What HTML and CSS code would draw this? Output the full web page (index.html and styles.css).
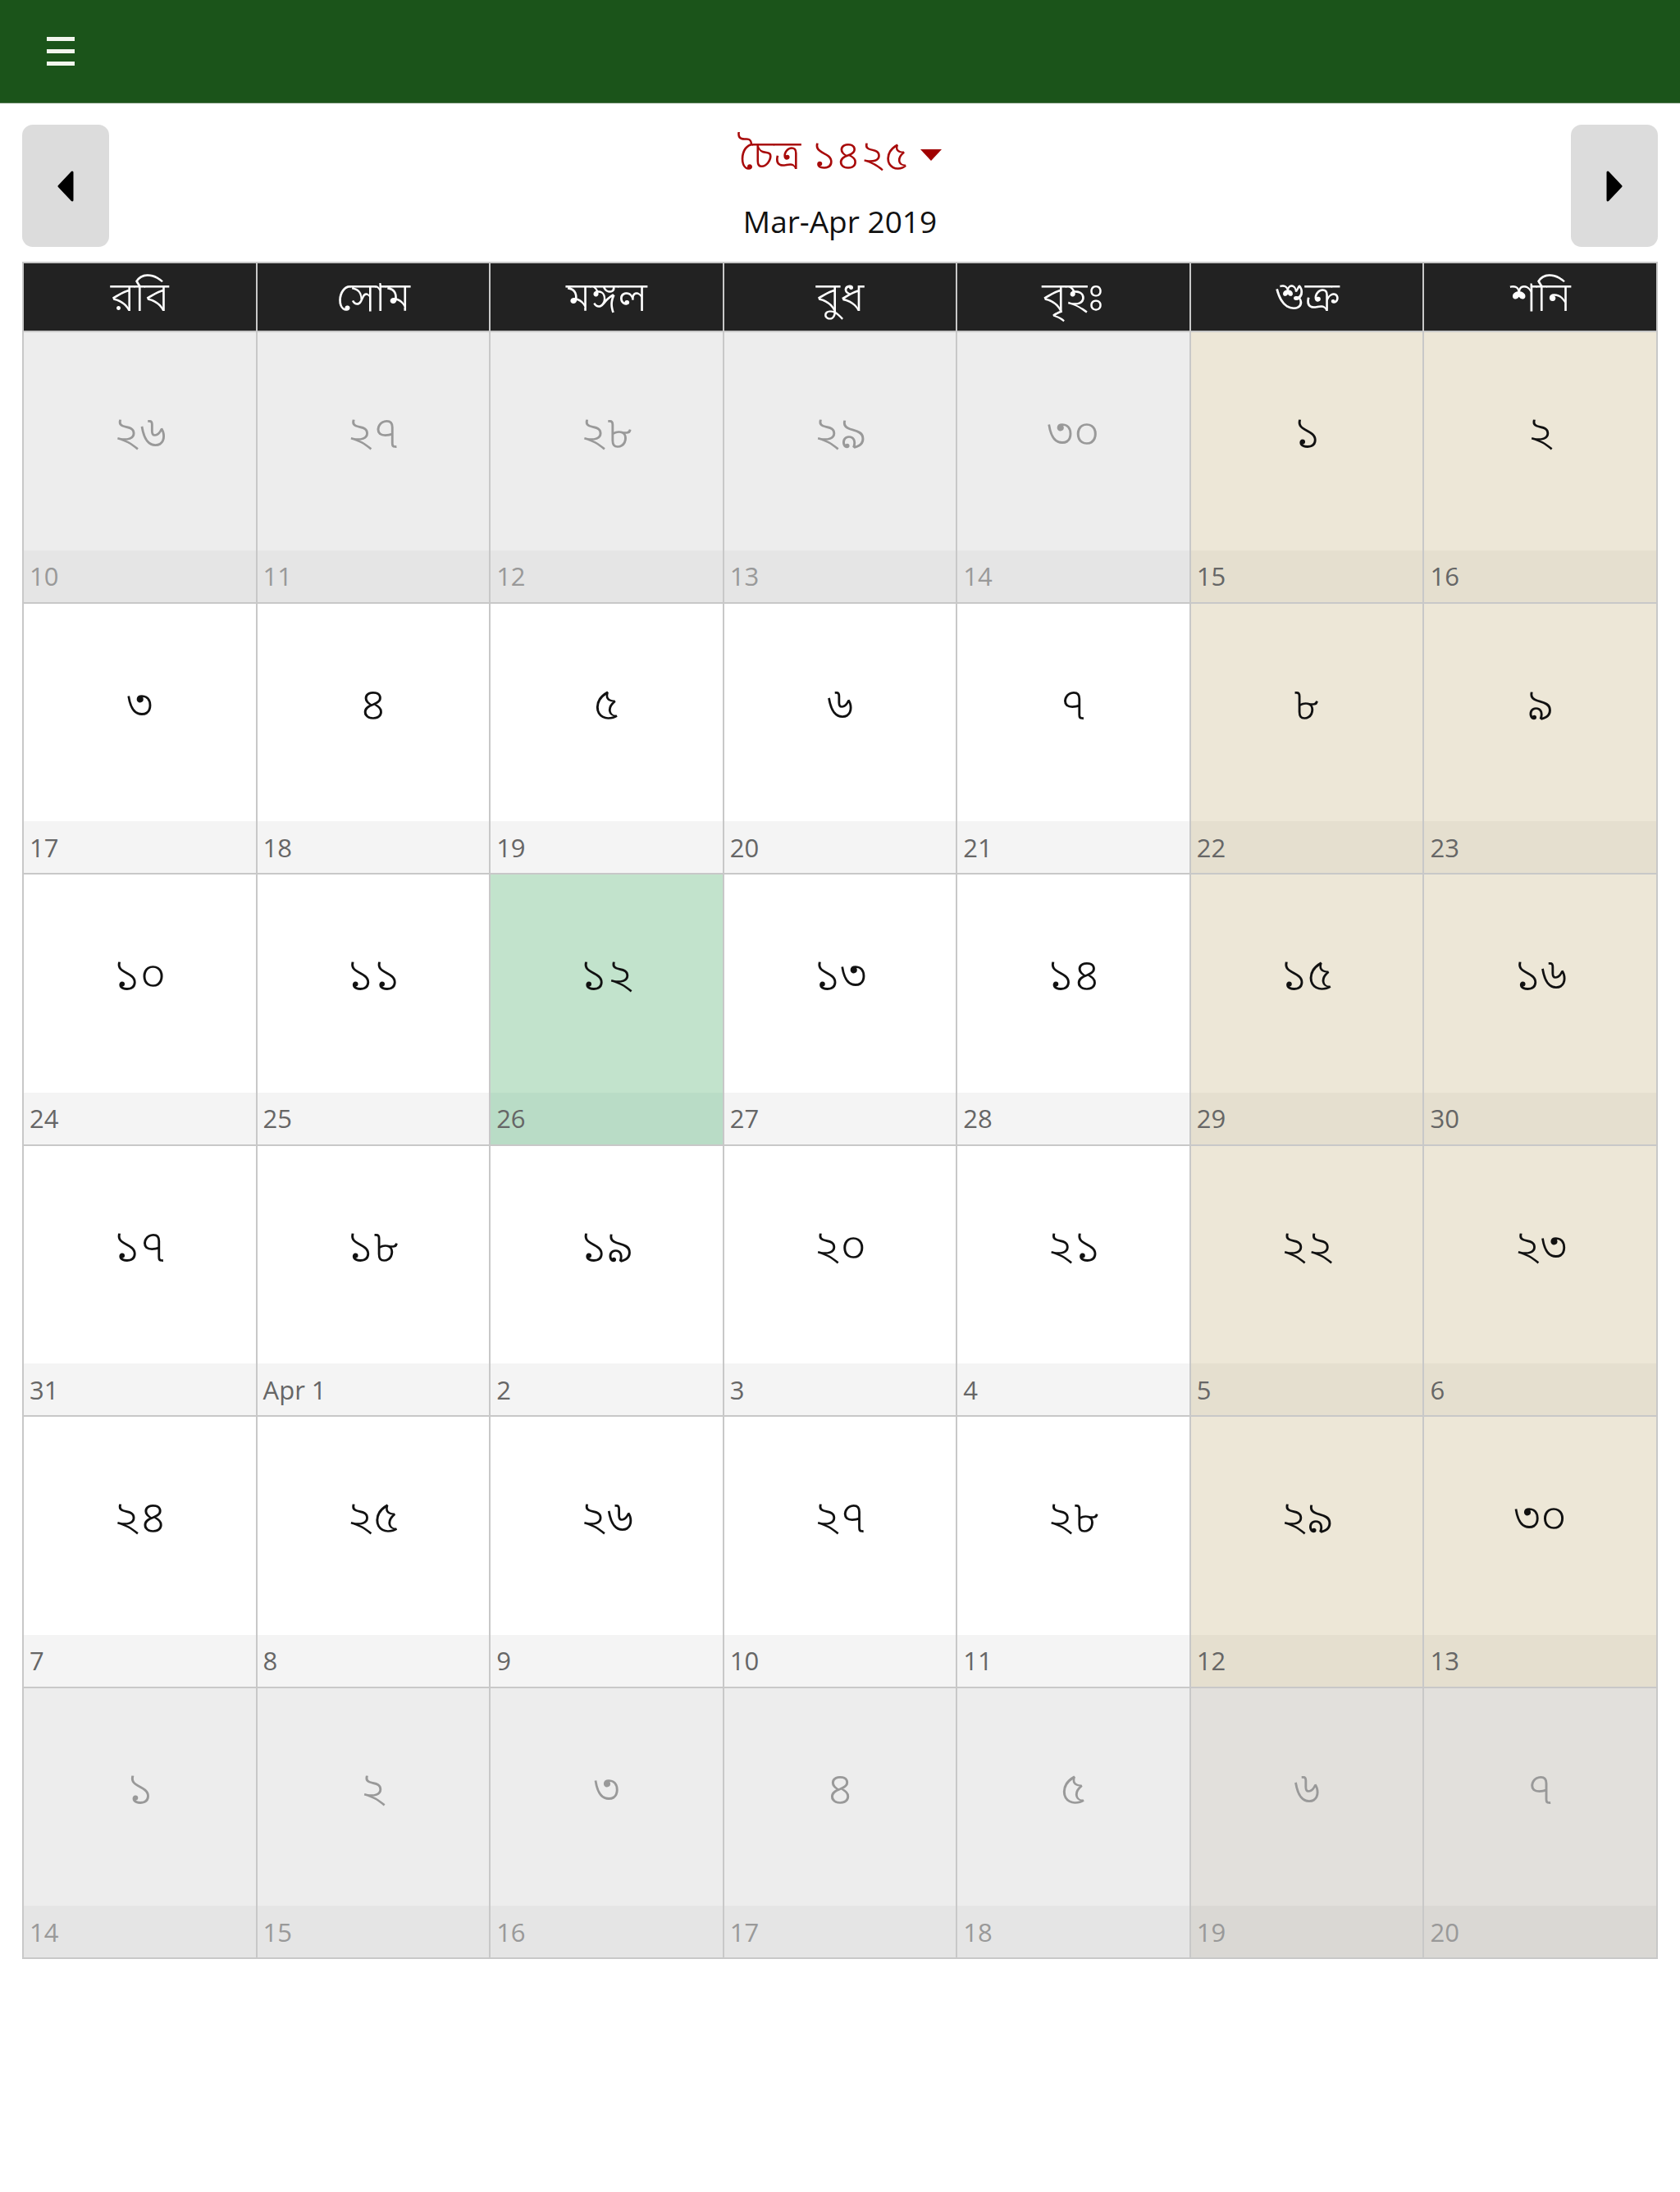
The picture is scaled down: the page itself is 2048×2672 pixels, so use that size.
FILE: index.html
```html
<!DOCTYPE html>
<html lang="bn">
<head>
<meta charset="utf-8">
<title>বাংলা ক্যালেন্ডার</title>
<link rel="stylesheet" href="styles.css">
</head>
<body>
<header class="topbar">
  <button class="menu" aria-label="menu"><span></span><span></span><span></span></button>
</header>
<nav class="monthnav">
  <button class="navbtn" aria-label="previous">
    <svg width="22" height="38" viewBox="0 0 22 38"><polygon points="19,2 19,36 3,19" fill="#000" stroke="#000" stroke-width="3" stroke-linejoin="round"/></svg>
  </button>
  <div class="monthtitle">
    <div class="bn-month">চৈত্র ১৪২৫<span class="caret"></span></div>
    <div class="en-month">Mar-Apr 2019</div>
  </div>
  <button class="navbtn" aria-label="next">
    <svg width="22" height="38" viewBox="0 0 22 38"><polygon points="3,2 3,36 19,19" fill="#000" stroke="#000" stroke-width="3" stroke-linejoin="round"/></svg>
  </button>
</nav>
<main class="cal">
  <div class="dow">রবি</div><div class="dow">সোম</div><div class="dow">মঙ্গল</div><div class="dow">বুধ</div><div class="dow">বৃহঃ</div><div class="dow">শুক্র</div><div class="dow">শনি</div>

  <div class="day out"><div class="bn">২৬</div><div class="gr">10</div></div>
  <div class="day out"><div class="bn">২৭</div><div class="gr">11</div></div>
  <div class="day out"><div class="bn">২৮</div><div class="gr">12</div></div>
  <div class="day out"><div class="bn">২৯</div><div class="gr">13</div></div>
  <div class="day out"><div class="bn">৩০</div><div class="gr">14</div></div>
  <div class="day wk"><div class="bn">১</div><div class="gr">15</div></div>
  <div class="day wk"><div class="bn">২</div><div class="gr">16</div></div>

  <div class="day"><div class="bn">৩</div><div class="gr">17</div></div>
  <div class="day"><div class="bn">৪</div><div class="gr">18</div></div>
  <div class="day"><div class="bn">৫</div><div class="gr">19</div></div>
  <div class="day"><div class="bn">৬</div><div class="gr">20</div></div>
  <div class="day"><div class="bn">৭</div><div class="gr">21</div></div>
  <div class="day wk"><div class="bn">৮</div><div class="gr">22</div></div>
  <div class="day wk"><div class="bn">৯</div><div class="gr">23</div></div>

  <div class="day"><div class="bn">১০</div><div class="gr">24</div></div>
  <div class="day"><div class="bn">১১</div><div class="gr">25</div></div>
  <div class="day today"><div class="bn">১২</div><div class="gr">26</div></div>
  <div class="day"><div class="bn">১৩</div><div class="gr">27</div></div>
  <div class="day"><div class="bn">১৪</div><div class="gr">28</div></div>
  <div class="day wk"><div class="bn">১৫</div><div class="gr">29</div></div>
  <div class="day wk"><div class="bn">১৬</div><div class="gr">30</div></div>

  <div class="day"><div class="bn">১৭</div><div class="gr">31</div></div>
  <div class="day"><div class="bn">১৮</div><div class="gr">Apr 1</div></div>
  <div class="day"><div class="bn">১৯</div><div class="gr">2</div></div>
  <div class="day"><div class="bn">২০</div><div class="gr">3</div></div>
  <div class="day"><div class="bn">২১</div><div class="gr">4</div></div>
  <div class="day wk"><div class="bn">২২</div><div class="gr">5</div></div>
  <div class="day wk"><div class="bn">২৩</div><div class="gr">6</div></div>

  <div class="day"><div class="bn">২৪</div><div class="gr">7</div></div>
  <div class="day"><div class="bn">২৫</div><div class="gr">8</div></div>
  <div class="day"><div class="bn">২৬</div><div class="gr">9</div></div>
  <div class="day"><div class="bn">২৭</div><div class="gr">10</div></div>
  <div class="day"><div class="bn">২৮</div><div class="gr">11</div></div>
  <div class="day wk"><div class="bn">২৯</div><div class="gr">12</div></div>
  <div class="day wk"><div class="bn">৩০</div><div class="gr">13</div></div>

  <div class="day out"><div class="bn">১</div><div class="gr">14</div></div>
  <div class="day out"><div class="bn">২</div><div class="gr">15</div></div>
  <div class="day out"><div class="bn">৩</div><div class="gr">16</div></div>
  <div class="day out"><div class="bn">৪</div><div class="gr">17</div></div>
  <div class="day out"><div class="bn">৫</div><div class="gr">18</div></div>
  <div class="day out wk"><div class="bn">৬</div><div class="gr">19</div></div>
  <div class="day out wk"><div class="bn">৭</div><div class="gr">20</div></div>
</main>
</body>
</html>
```
FILE: styles.css
```css
* { box-sizing: border-box; }
html, body { margin: 0; padding: 0; background: #fff; }
body {
  font-family: "Open Sans", "Noto Sans Bengali", "Lohit Bengali", "FreeSans", "Noto Sans", sans-serif;
  color: #111;
}
.topbar {
  height: 126px;
  background: #1b541a;
  border-bottom: 1px solid #5a7d58;
  display: flex;
  align-items: center;
}
.menu {
  margin-left: 57px;
  width: 34px;
  height: 35px;
  padding: 0;
  border: 0;
  background: none;
  display: flex;
  flex-direction: column;
  justify-content: space-between;
}
.menu span {
  display: block;
  height: 5px;
  width: 34px;
  background: #f2f6ee;
}
.monthnav {
  display: flex;
  justify-content: space-between;
  align-items: flex-start;
  padding: 26px 27px 0;
  height: 193px;
}
.navbtn {
  width: 106px;
  height: 149px;
  border: 0;
  border-radius: 13px;
  background: #dcdcdc;
  display: flex;
  align-items: center;
  justify-content: center;
  padding: 0;
}
.monthtitle {
  display: flex;
  flex-direction: column;
  align-items: center;
}
.bn-month {
  color: #a80a0a;
  font-size: 50px;
  font-weight: 300;
  line-height: 66px;
  margin-top: 2px;
  display: flex;
  align-items: center;
}
.caret {
  display: inline-block;
  margin-left: 14px;
  margin-top: 4px;
  width: 0;
  height: 0;
  border-left: 13px solid transparent;
  border-right: 13px solid transparent;
  border-top: 14px solid #a00000;
}
.en-month {
  margin-top: 30px;
  font-size: 37px;
  line-height: 40px;
  color: #111;
}
.cal {
  margin: 0 27px;
  display: grid;
  grid-template-columns: repeat(7, 1fr);
  border-top: 2px solid #c8c8c8;
  border-left: 2px solid #c8c8c8;
}
.dow {
  height: 84px;
  background: #222;
  color: #fff;
  font-size: 50px;
  font-weight: 300;
  display: flex;
  align-items: center;
  justify-content: center;
  border-right: 2px solid #c8c8c8;
  border-bottom: 2px solid #c8c8c8;
}
.day {
  height: 330.5px;
  display: flex;
  flex-direction: column;
  background: #fff;
  border-right: 2px solid #c8c8c8;
  border-bottom: 2px solid #c8c8c8;
}
.bn {
  flex: 1;
  display: flex;
  align-items: center;
  justify-content: center;
  font-size: 55px;
  font-weight: 300;
  color: #111;
  padding-bottom: 20px;
}
.gr {
  height: 63px;
  display: flex;
  align-items: center;
  padding-left: 7px;
  font-size: 31px;
  color: #666;
  background: #f4f4f4;
}
.day.wk { background: #ede7d7; }
.day.wk .gr { background: #e5dfcf; }
.day.out { background: #ededed; }
.day.out .gr { background: #e5e5e5; color: #999; }
.day.out .bn { color: #999; }
.day.out.wk { background: #e2e0dc; }
.day.out.wk .gr { background: #dad8d4; }
.day.today { background: #c2e3cc; }
.day.today .gr { background: #b9dcc6; }
```
